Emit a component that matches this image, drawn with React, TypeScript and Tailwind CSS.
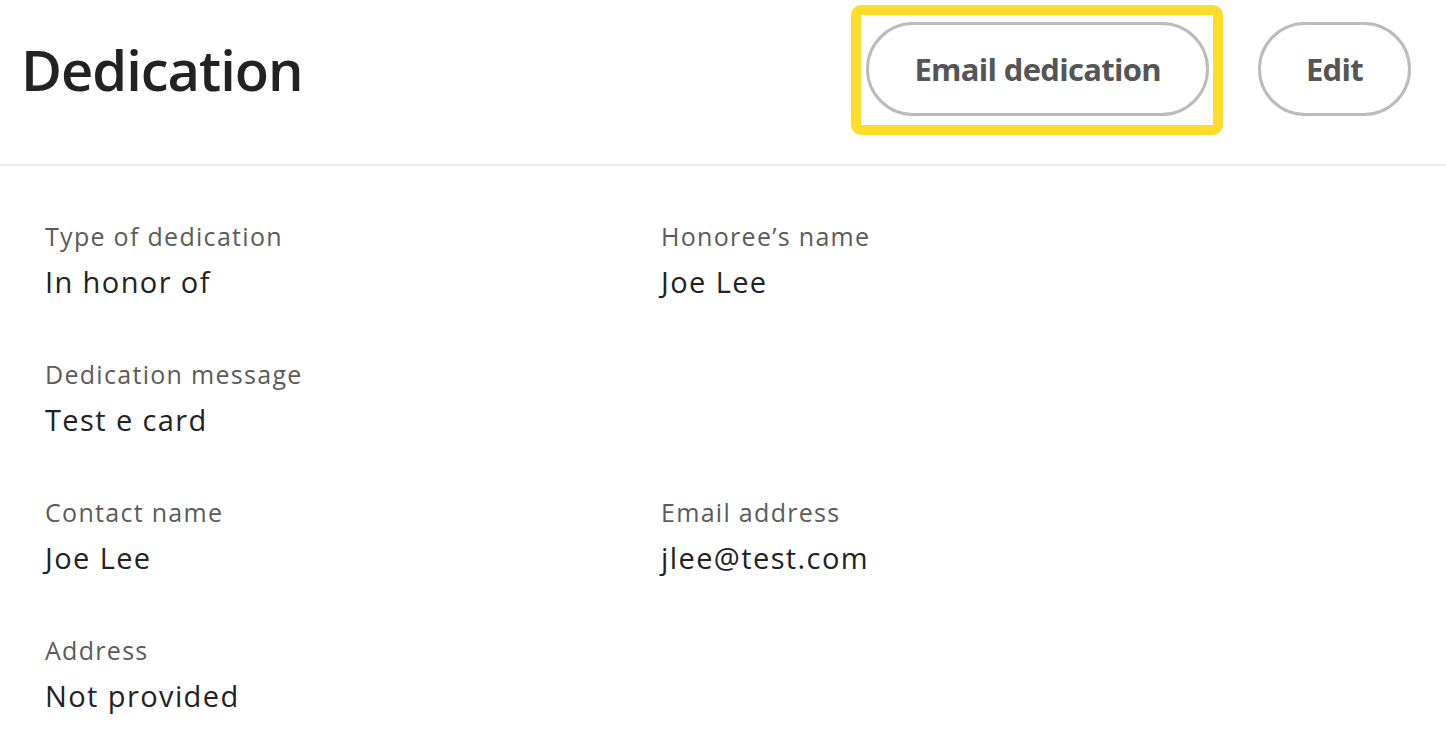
import React from "react";

const fields: { label: string; value: string }[][] = [
  [
    { label: "Type of dedication", value: "In honor of" },
    { label: "Honoree’s name", value: "Joe Lee" },
  ],
  [{ label: "Dedication message", value: "Test e card" }],
  [
    { label: "Contact name", value: "Joe Lee" },
    { label: "Email address", value: "jlee@test.com" },
  ],
  [{ label: "Address", value: "Not provided" }],
];

function Field({ label, value }: { label: string; value: string }) {
  return (
    <div className="flex flex-col gap-[6px]">
      <div className="text-[25px] leading-[36px] tracking-[1.3px] text-[#5b5b5b]">
        {label}
      </div>
      <div className="text-[29px] leading-[44px] tracking-[1.4px] text-[#222222]">
        {value}
      </div>
    </div>
  );
}

export default function App() {
  return (
    <div
      className="min-h-[750px] w-full bg-white"
      style={{ fontFamily: "'Open Sans', Lato, sans-serif" }}
    >
      <header className="flex items-center justify-between border-b-2 border-[#ececec] pb-[48px] pl-[21px] pr-[35px] pt-[22px]">
        <h1 className="text-[56px] font-semibold leading-none tracking-[-1px] text-[#222222]">
          Dedication
        </h1>
        <div className="flex items-center gap-[49px]">
          {/* focus ring around the email action */}
          <div className="-mb-[19px] -ml-[15px] -mr-[14px] -mt-[17px] rounded-[10px] border-[10px] border-[#fddc2b] pb-[9px] pl-[5px] pr-[4px] pt-[7px]">
            <button className="flex h-[94px] items-center rounded-full border-[3px] border-[#bbbbbb] px-[45px] text-[31px] font-bold tracking-[-0.7px] text-[#555555]">
              Email dedication
            </button>
          </div>
          <button className="flex h-[94px] items-center rounded-full border-[3px] border-[#bbbbbb] px-[45px] text-[31px] font-bold tracking-[-0.7px] text-[#555555]">
            Edit
          </button>
        </div>
      </header>
      <section className="flex flex-col gap-[52px] pl-[45px] pt-[52px]">
        {fields.map((row, i) => (
          <div key={i} className="grid grid-cols-[616px_1fr]">
            {row.map((f) => (
              <Field key={f.label} label={f.label} value={f.value} />
            ))}
          </div>
        ))}
      </section>
    </div>
  );
}
